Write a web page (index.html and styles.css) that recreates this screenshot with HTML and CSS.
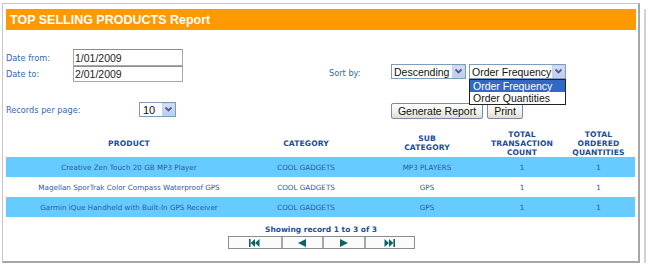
FILE: index.html
```html
<!DOCTYPE html>
<html>
<head>
<meta charset="utf-8">
<link rel="stylesheet" href="styles.css">
</head>
<body>
<div class="panel">
  <div class="titlebar">TOP SELLING PRODUCTS Report</div>
  <div class="form">
    <span class="lbl lbl-from">Date from:</span>
    <div class="date date-from">1/01/2009</div>
    <span class="lbl lbl-to">Date to:</span>
    <div class="date date-to">2/01/2009</div>
    <span class="lbl lbl-sort">Sort by:</span>
    <div class="sortctl">
      <div class="sel sel-desc"><span class="sel-text">Descending</span><span class="sel-btn"><svg width="9" height="7" viewBox="0 0 9 7"><path d="M1.5 1.5 L4.5 4.5 L7.5 1.5" fill="none" stroke="#4d6185" stroke-width="1.8"/></svg></span></div>
      <div class="sel sel-order"><span class="sel-text">Order Frequency</span><span class="sel-btn"><svg width="9" height="7" viewBox="0 0 9 7"><path d="M1.5 1.5 L4.5 4.5 L7.5 1.5" fill="none" stroke="#4d6185" stroke-width="1.8"/></svg></span>
        <div class="droplist">
          <div class="opt opt-on">Order Frequency</div>
          <div class="opt">Order Quantities</div>
        </div>
      </div>
    </div>
    <span class="lbl lbl-rec">Records per page:</span>
    <div class="sel sel-rec"><span class="sel-text">10</span><span class="sel-btn"><svg width="9" height="7" viewBox="0 0 9 7"><path d="M1.5 1.5 L4.5 4.5 L7.5 1.5" fill="none" stroke="#4d6185" stroke-width="1.8"/></svg></span></div>
    <div class="btns">
      <button class="btn btn-gen">Generate Report</button>
      <button class="btn btn-print">Print</button>
    </div>
  </div>

  <table class="grid">
    <colgroup>
      <col class="c1"><col class="c2"><col class="c3"><col class="c4"><col class="c5">
    </colgroup>
    <thead>
      <tr>
        <th>PRODUCT</th>
        <th>CATEGORY</th>
        <th class="t3">SUB<br>CATEGORY</th>
        <th>TOTAL<br>TRANSACTION<br>COUNT</th>
        <th class="t5">TOTAL<br>ORDERED<br>QUANTITIES</th>
      </tr>
    </thead>
    <tbody>
      <tr class="alt">
        <td>Creative Zen Touch 20 GB MP3 Player</td>
        <td>COOL GADGETS</td>
        <td class="t3">MP3 PLAYERS</td>
        <td>1</td>
        <td class="t5">1</td>
      </tr>
      <tr>
        <td>Magellan SporTrak Color Compass Waterproof GPS</td>
        <td>COOL GADGETS</td>
        <td class="t3">GPS</td>
        <td>1</td>
        <td class="t5">1</td>
      </tr>
      <tr class="alt">
        <td>Garmin iQue Handheld with Built-In GPS Receiver</td>
        <td>COOL GADGETS</td>
        <td class="t3">GPS</td>
        <td>1</td>
        <td class="t5">1</td>
      </tr>
    </tbody>
  </table>

  <div class="showing">Showing record 1 to 3 of 3</div>
  <div class="pager">
    <div class="pg pg1"><svg width="11" height="8" viewBox="0 0 11 8"><rect x="0" y="0" width="1.6" height="8" fill="#0a6464"/><polygon points="6,0 6,8 1.6,4" fill="#0a6464"/><polygon points="10.5,0 10.5,8 6,4" fill="#0a6464"/></svg></div>
    <div class="pg pg2"><svg width="8" height="8" viewBox="0 0 8 8"><polygon points="8,0 8,8 0,4" fill="#0a6464"/></svg></div>
    <div class="pg pg3"><svg width="8" height="8" viewBox="0 0 8 8"><polygon points="0,0 0,8 8,4" fill="#0a6464"/></svg></div>
    <div class="pg pg4"><svg width="11" height="8" viewBox="0 0 11 8"><polygon points="0.5,0 0.5,8 5,4" fill="#0a6464"/><polygon points="5,0 5,8 9.4,4" fill="#0a6464"/><rect x="9.4" y="0" width="1.6" height="8" fill="#0a6464"/></svg></div>
  </div>
</div>
</body>
</html>
```

FILE: styles.css
```css
body {
  margin: 0;
  background: #fff;
  font-family: "Liberation Sans", Arial, sans-serif;
}

.panel {
  margin: 3px 0 0 2px;
  width: 630px;
  padding: 5px 2px 12px 3px;
  border-top: 1px solid #c6c6c6;
  border-left: 1px solid #c6c6c6;
  border-right: 2px solid #a6a6a6;
  border-bottom: 2px solid #a6a6a6;
  box-shadow: 4px 4px 0 #fff, 6px 6px 0 #d2d2d2;
}

.titlebar {
  background: #ff9900;
  height: 21px;
  line-height: 22px;
  color: #fff;
  font-weight: bold;
  font-size: 12.5px;
  padding-left: 4px;
}

.form {
  display: grid;
  grid-template-columns: 67px 110px 146px 62px auto;
  grid-template-rows: 17px 16px 20px 16px;
  margin-top: 19px;
}

.lbl {
  font-family: "DejaVu Sans", Verdana, sans-serif;
  font-size: 8.2px;
  color: #3369ad;
  align-self: center;
  white-space: nowrap;
}
.lbl-from { grid-column: 1; grid-row: 1; }
.lbl-to { grid-column: 1; grid-row: 2; }
.lbl-sort { grid-column: 4; grid-row: 2; margin-top: -3px; }
.lbl-rec { grid-column: 1; grid-row: 4; }

.date {
  box-sizing: border-box;
  border: 1px solid #a9a9a9;
  border-top-color: #8c8c8c;
  background: #fff;
  font-size: 10.5px;
  color: #222;
  padding-left: 1px;
  display: flex;
  align-items: center;
}
.date-from { grid-column: 2; grid-row: 1; height: 17px; }
.date-to { grid-column: 2; grid-row: 2; height: 16px; }

.sortctl {
  grid-column: 5;
  grid-row: 2;
  display: flex;
  gap: 3px;
  margin-top: -2px;
  align-self: start;
}

.sel {
  position: relative;
  box-sizing: border-box;
  height: 15px;
  border: 1px solid #7f9db9;
  background: #fff;
  display: flex;
  align-items: center;
  font-size: 10.5px;
  color: #111;
}
.sel-text {
  flex: 1;
  padding-left: 2px;
  white-space: nowrap;
}
.sel-btn {
  box-sizing: border-box;
  width: 13px;
  height: 13px;
  background: linear-gradient(#d3def6, #bccdf0);
  border: 1px solid #c3d2f0;
  display: flex;
  align-items: center;
  justify-content: center;
}
.sel-desc { width: 75px; }
.sel-order { width: 97px; }
.sel-rec {
  grid-column: 2;
  grid-row: 4;
  width: 37px;
  margin-left: 66px;
  align-self: start;
}
.sel-rec .sel-text { font-size: 11px; padding-left: 3px; }

.droplist {
  position: absolute;
  left: -1px;
  top: 14px;
  width: 97px;
  box-sizing: border-box;
  border: 1px solid #222;
  background: #fff;
  z-index: 2;
}
.opt {
  height: 12px;
  line-height: 12px;
  padding-left: 3px;
  font-size: 10.5px;
  color: #111;
  white-space: nowrap;
}
.opt-on {
  background: #316ac5;
  color: #fff;
}

.btns {
  grid-column: 5;
  grid-row: 4;
  display: flex;
  gap: 4px;
  margin-top: 1px;
  align-self: start;
}
.btn {
  box-sizing: border-box;
  height: 16px;
  padding: 0;
  border: 1px solid #7b8ba6;
  border-radius: 2px;
  background: linear-gradient(#ffffff, #f0f0ea 60%, #dcdcd4);
  font-family: "Liberation Sans", Arial, sans-serif;
  font-size: 10.5px;
  color: #111;
  line-height: 13px;
}
.btn-gen { width: 92px; }
.btn-print { width: 36px; }

.grid {
  margin-top: 11px;
  width: 629px;
  table-layout: fixed;
  border-collapse: collapse;
  font-family: "DejaVu Sans", Verdana, sans-serif;
}
.c1 { width: 246px; }
.c2 { width: 108px; }
.c3 { width: 128px; }
.c4 { width: 68px; }
.c5 { width: 79px; }

.grid th {
  height: 28px;
  padding: 0;
  font-size: 7.6px;
  line-height: 9px;
  font-weight: bold;
  color: #1b4e92;
  text-align: center;
  vertical-align: middle;
  letter-spacing: 0.1px;
}
.grid td {
  height: 20px;
  padding: 0;
  font-size: 7.2px;
  color: #2a5a9c;
  text-align: center;
  vertical-align: middle;
  white-space: nowrap;
}
.grid .t3 { padding-left: 6px; }
.grid .t5 { padding-left: 6px; }
.grid tr.alt td { background: #66ccff; }

.showing {
  margin-top: 8px;
  text-align: center;
  font-family: "DejaVu Sans", Verdana, sans-serif;
  font-size: 7.5px;
  line-height: 10px;
  font-weight: bold;
  color: #1b4e92;
}

.pager {
  display: flex;
  width: 187px;
  height: 13px;
  box-sizing: border-box;
  margin: 1px auto 0;
  border: 1px solid #8c8c8c;
  background: #fbfbfb;
}
.pg {
  display: flex;
  align-items: center;
  justify-content: center;
  border-left: 2px solid #a8a8a8;
  box-sizing: border-box;
}
.pg1 { width: 52px; border-left: none; }
.pg2 { width: 41px; }
.pg3 { width: 42px; }
.pg4 { flex: 1; }
```
